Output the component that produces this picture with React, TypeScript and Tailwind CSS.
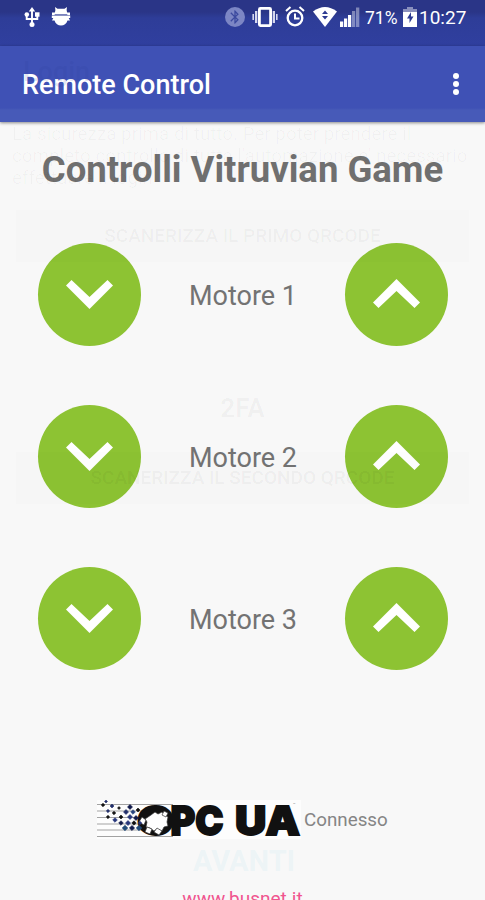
import { MdBluetooth } from "react-icons/md";

interface MotorProps {
  name: string;
}

const motors: MotorProps[] = [
  { name: "Motore 1" },
  { name: "Motore 2" },
  { name: "Motore 3" },
];

const UsbIcon = () => (
  <svg width="16" height="21" viewBox="0 0 16 21" fill="none" stroke="white" strokeWidth="1.9">
    <path d="M8 3v14M2.700 8v4h10.600V8" />
    <path d="M8 0l3.200 4.500H4.800z" fill="white" stroke="none" />
    <circle cx="2.8" cy="7.500" r="2.300" fill="white" stroke="none" />
    <path d="M11 5.300h4.500v4.400H11z" fill="white" stroke="none" />
    <circle cx="8" cy="17.6" r="2.5" fill="white" stroke="none" />
  </svg>
);

const DebugIcon = () => (
  <svg width="20" height="20" viewBox="0 0 20 20" fill="white">
    <path d="M4 0l2.500 1.800h7L16 0l-.4 3 .9 4.500H3.500l.9-4.500z" />
    <path d="M1 5.500h3V8H1zM16 5.500h3V8h-3zM.8 8.500h18.400v2.500h-1.500l1.300 2.500h-2.500C15.500 17 13 18.500 10 18.500S4.500 17 3.500 13.500H1L2.300 11H.8z" />
    <path d="M3.500 7.800h13" stroke="#6670b5" strokeWidth=".8" />
  </svg>
);

const VibrateIcon = () => (
  <svg width="26" height="20" viewBox="0 0 26 20">
    <rect x="7.400" y="1.400" width="11.200" height="17.200" rx="1" fill="none" stroke="white" strokeWidth="2.800" />
    <path d="M3 4h2.300v12H3zM20.700 4H23v12h-2.300z" fill="#d5d8ee" />
    <path d="M.4 7H2v6H.4zM24 7h1.600v6H24z" fill="#d5d8ee" />
  </svg>
);

const AlarmIcon = () => (
  <svg width="20" height="21" viewBox="0 0 20 21" fill="none" stroke="white" strokeWidth="2.300">
    <circle cx="10" cy="12" r="7.300" />
    <path d="M10 7.500V12.500h4.500M1 5l4.500-4M19 5l-4.500-4" strokeWidth="2" />
  </svg>
);

const WifiIcon = () => (
  <svg width="24" height="20" viewBox="0 0 24 20">
    <path d="M0 4.500Q12-4.500 24 4.500L12 20z" fill="white" />
    <path d="M12 3.500l3 3.500H9zM12 12.500L9 9h6z" fill="#2c3a92" />
  </svg>
);

const SignalIcon = () => (
  <svg width="20" height="20" viewBox="0 0 20 20" fill="white">
    <path d="M0 14.500h3.200V20H0zM4 11.500h3.200V20H4zM8 8h3.200v12H8z" />
    <path d="M12 4h3.200v16H12zM16 .5h3.300V20H16z" opacity=".4" />
  </svg>
);

const BatteryIcon = () => (
  <svg width="14" height="20" viewBox="0 0 14 20">
    <path d="M4 0h6v2h4v4H0V2h4z" fill="white" opacity=".45" />
    <path d="M0 5h14v15H0z" fill="white" />
    <path d="M8 5L4 11.500h2.500v4.500L10.500 9.500H8z" fill="#2c3a92" />
  </svg>
);

const StatusBar = () => (
  <div className="flex h-[46px] items-start bg-[linear-gradient(#2a3587_0px,#2a3587_12px,#2e3d98_18px,#303f9f_46px)] leading-[22px] text-white">
    <div className="mt-[7px] ml-6 flex gap-[11px]">
      <UsbIcon />
      <DebugIcon />
    </div>
    <div className="mt-[7px] ml-[154px] flex">
      <div className="flex size-5 items-center justify-center rounded-full bg-[#7c86c4]">
        <MdBluetooth className="size-4 text-[#3c4a9f]" />
      </div>
      <div className="ml-[7px]">
        <VibrateIcon />
      </div>
      <div className="-mt-px ml-[7px]">
        <AlarmIcon />
      </div>
      <div className="ml-2">
        <WifiIcon />
      </div>
      <div className="ml-[3px]">
        <SignalIcon />
      </div>
      <span className="ml-[5px] w-[34px] text-[17.5px]">71%</span>
      <div className="ml-1">
        <BatteryIcon />
      </div>
      <span className="ml-[2px] text-[19px]">10:27</span>
    </div>
  </div>
);

const AppBar = () => (
  <header className="flex h-[76px] items-center justify-between bg-[linear-gradient(#3f51b5_0px,#3f51b5_62px,#475ab8_64px)] pr-[26px] pl-[22px] shadow-[0_1px_3px_rgba(0,0,0,0.45)]">
    <h1 className="pt-[3px] text-[27px] font-medium text-white">Remote Control</h1>
    <div className="flex flex-col gap-[2px]">
      <span className="size-[6px] rounded-full bg-white" />
      <span className="size-[6px] rounded-full bg-white" />
      <span className="size-[6px] rounded-full bg-white" />
    </div>
  </header>
);

const Motor = ({ name }: MotorProps) => (
  <div className="flex h-[103px] items-center justify-between">
    <button className="flex size-[103px] items-center justify-center rounded-full bg-[#8dc333]">
      <svg width="47" height="29" viewBox="0 0 47 29" fill="white">
        <path d="M5.500 0l18 17 18-17L47 5.500 23.500 29 0 5.500z" />
      </svg>
    </button>
    <span className="pt-[3px] text-[27px] text-[#737373]">{name}</span>
    <button className="flex size-[103px] items-center justify-center rounded-full bg-[#8dc333] pb-[3px]">
      <svg width="47" height="29" viewBox="0 0 47 29" fill="white">
        <path d="M5.500 29l18-17 18 17 5.500-5.500L23.500 0 0 23.500z" />
      </svg>
    </button>
  </div>
);

// x, y, half size and colour of the pixels flying off the logo
const pixels: [number, number, number, string][] = [
  [9, 1.5, 1.5, "#23306b"],
  [6, 5, 1.8, "#111"],
  [15, 6, 2, "#23306b"],
  [22, 8, 1.5, "#111"],
  [11, 11, 1.7, "#23306b"],
  [17, 13, 1.8, "#111"],
  [11, 17, 1.7, "#111"],
  [33, 7, 2.5, "#101a4a"],
  [29, 12, 2.5, "#23306b"],
  [36, 12, 2.3, "#26437e"],
  [41, 10, 2, "#111"],
  [24, 17, 2, "#111"],
  [18, 20, 2.3, "#26367a"],
  [33, 17, 2.5, "#26367a"],
  [39, 18, 2.5, "#101a4a"],
  [24, 23, 2.3, "#101a4a"],
  [31, 23, 2.5, "#26367a"],
  [37, 23, 2.2, "#111"],
  [28, 28, 2.8, "#204a78"],
  [35, 28, 2.6, "#101a4a"],
  [42, 28, 2.8, "#204a78"],
  [43, 23, 1.8, "#26367a"],
];

const OpcLogo = () => (
  <svg width="204" height="39" viewBox="0 0 204 39" className="overflow-visible bg-[#fdfdfd]">
    <path d="M0 4.500h76M0 11h48M0 17.500h44M0 24h46M0 30h48M0 36.500h76" stroke="#a3a3a3" />
    <g fill="#111" stroke="#111" strokeWidth="1.8" fontFamily="Inter, sans-serif" fontWeight="900" fontSize="40">
      <text x="40" y="34.500" textLength="37" lengthAdjust="spacingAndGlyphs">O</text>
      <text x="73.500" y="34.500" textLength="53" lengthAdjust="spacingAndGlyphs">PC</text>
      <text x="138" y="34.500" textLength="65" lengthAdjust="spacingAndGlyphs">UA</text>
    </g>
    <g fill="white" stroke="#333" strokeWidth=".7">
      <path d="M54 15l4-3 3 2 4-2 3 3 3 2-1 5 1 4-4 1-2 4-5-2-3 2-4-3-4-1 1-5-2-3z" />
      <path d="M45 17l4 3-2 5-5-3zM50 27l5 2-2 5-5-2zM60 28l5 3-3 4-5-3zM67 11l4 2-2 4-4-2z" />
    </g>
    {pixels.map(([x, y, r, color]) => (
      <path key={`${x}-${y}`} d={`M${x} ${y - r}l${r} ${r}l${-r} ${r}l${-r} ${-r}z`} fill={color} stroke={color} strokeWidth=".6" />
    ))}
    <text x="196" y="6" fontSize="4" fill="#888">™</text>
  </svg>
);

// Previous screen, still fading out over the controls
const LoginScreen = () => (
  <div className="pointer-events-none absolute inset-0 overflow-hidden">
    <div className="flex h-full flex-col pt-[54px]">
      <p className="pl-[23px] text-[27px] leading-9 font-medium text-[#2b3f9b]/15">Login</p>
      <div className="mt-[33px] pl-3 text-[18.8px] leading-[22px] whitespace-nowrap text-black/[0.03]">
        <p>La sicurezza prima di tutto. Per poter prendere il</p>
        <p>completo controllo di tutta l'automazione e' necessario</p>
        <p>effettuare il login</p>
      </div>
      <div className="mx-4 mt-[21px] flex h-[52px] items-center justify-center bg-black/[0.008] text-[19px] font-medium text-black/[0.04]">
        SCANERIZZA IL PRIMO QRCODE
      </div>
      <p className="mt-[129px] text-center text-[26px] leading-[34px] font-bold text-black/[0.035]">2FA</p>
      <div className="mx-4 mt-[27px] flex h-[52px] items-center justify-center bg-black/[0.008] text-[19px] font-medium text-black/[0.05]">
        SCANERIZZA IL SECONDO QRCODE
      </div>
      <p className="mt-[339px] pl-[3px] text-center text-[29px] leading-9 font-bold text-[#a5d8e8]/15">AVANTI</p>
    </div>
  </div>
);

export default function App() {
  return (
    <div className="relative h-[900px] w-[485px] overflow-hidden bg-[#f8f8f8] font-[Roboto,sans-serif]">
      <StatusBar />
      <AppBar />
      <main>
        <h2 className="mt-[25px] text-center text-[36.5px] leading-[46px] font-bold whitespace-nowrap text-[#6f6f6f]">
          Controlli Vitruvian Game
        </h2>
        <div className="mt-[50px] flex flex-col gap-[59px] pr-[37px] pl-[38px]">
          {motors.map(({ name }) => (
            <Motor key={name} name={name} />
          ))}
        </div>
        <div className="mt-[130px] ml-[97px] flex items-center gap-[3px]">
          <OpcLogo />
          <span className="pt-[2px] text-[18.8px] text-[#858585]">Connesso</span>
        </div>
        <p className="mt-[48px] text-center text-[19px] leading-6 text-[#f0558f]">www.busnet.it</p>
      </main>
      <LoginScreen />
    </div>
  );
}
